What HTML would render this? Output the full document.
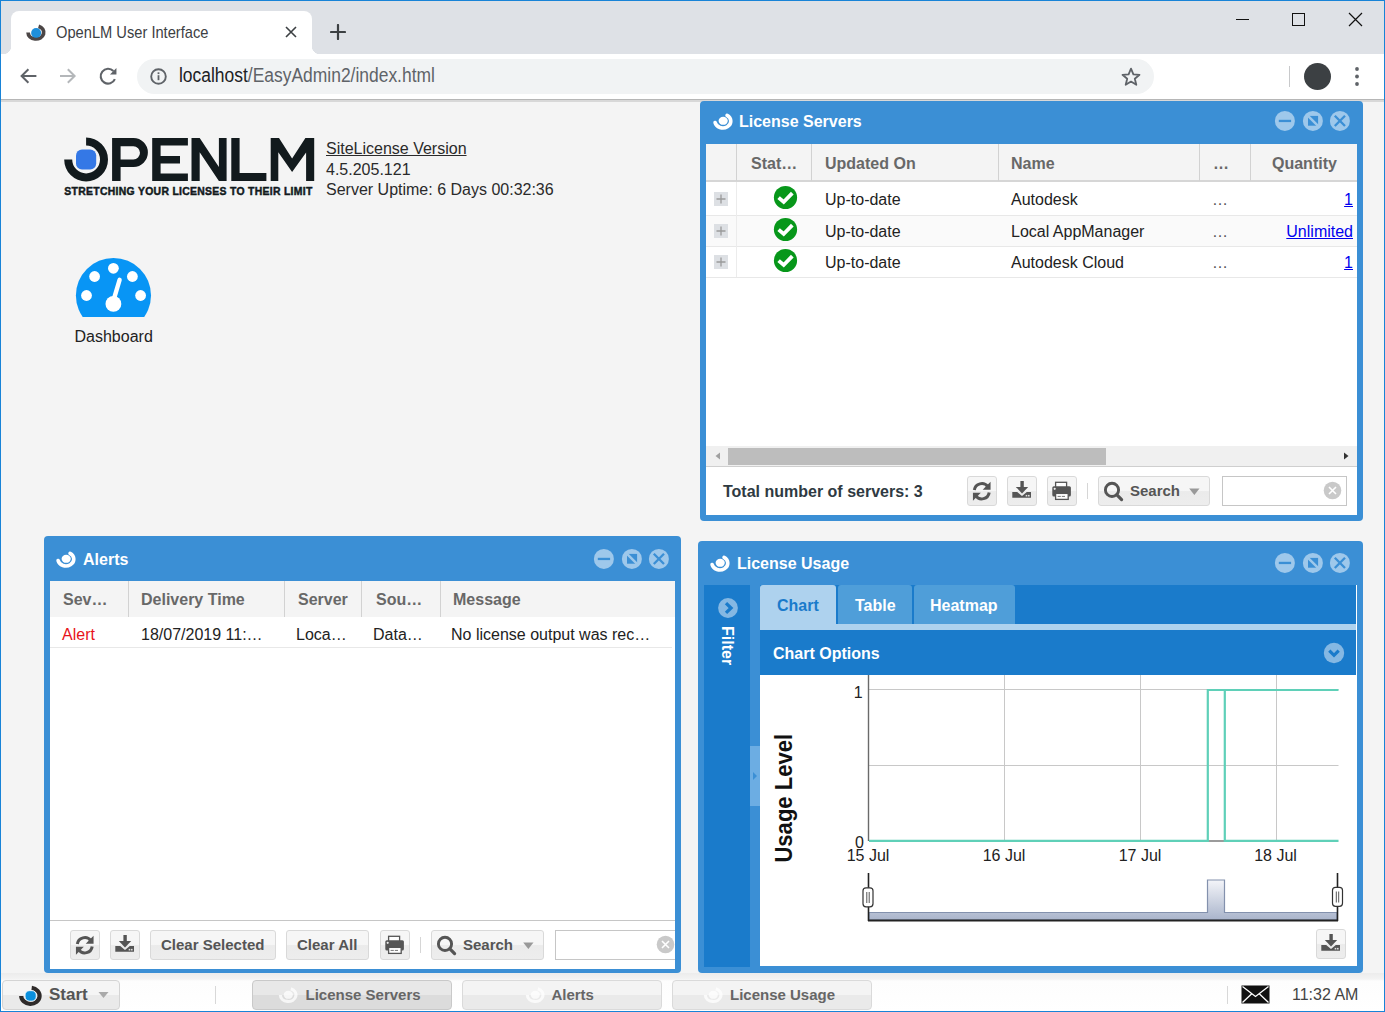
<!DOCTYPE html>
<html><head><meta charset="utf-8"><style>
*{box-sizing:border-box}
html,body{margin:0;padding:0}
body{width:1385px;height:1012px;overflow:hidden;position:relative;background:#f4f4f4;font-family:"Liberation Sans",sans-serif;color:#222}
.a{position:absolute}
svg{display:block}
#tabstrip{left:0;top:0;width:1385px;height:54px;background:#dee1e6}
#toolbar{left:0;top:54px;width:1385px;height:45px;background:#fff}
#tbline{left:0;top:99px;width:1385px;height:1px;background:#b6b6b6}
#wb{left:0;top:0;width:1385px;height:1012px;border:1px solid #1883d7;pointer-events:none;z-index:50}
#tab{left:11px;top:11px;width:301px;height:43px;background:#fff;border-radius:8px 8px 0 0}
#tab:before{content:"";position:absolute;left:-8px;bottom:0;width:8px;height:8px;background:radial-gradient(circle at 0 0,transparent 8px,#fff 8.5px)}
#tab:after{content:"";position:absolute;right:-8px;bottom:0;width:8px;height:8px;background:radial-gradient(circle at 100% 0,transparent 8px,#fff 8.5px)}
.ctext{color:#3c4043;white-space:nowrap}
#omni{left:137px;top:59px;width:1017px;height:35px;border-radius:18px;background:#f1f3f4}
.panel{background:#3b8fd5;border-radius:4px}
.ptitle{color:#fff;font-weight:bold;font-size:16px;white-space:nowrap}
.grid{background:#fff;overflow:hidden}
.gh{background:#f4f4f4;border-bottom:2px solid #d6d6d6}
.hd{font-weight:bold;color:#686868;font-size:16px;white-space:nowrap}
.cd{font-size:16px;color:#222;white-space:nowrap}
.vl{width:1px;background:#d2d2d2}
.btn{border:1px solid #d9d9d9;border-radius:3px;background:linear-gradient(#f6f6f6 0,#f6f6f6 48%,#ebebeb 52%,#ededed 100%)}
.btxt{font-weight:bold;font-size:15px;color:#555;white-space:nowrap}
</style></head><body>
<div id="tabstrip" class="a"></div><div id="tab" class="a"></div><div id="toolbar" class="a"></div><div id="tbline" class="a"></div><div class="a" style="left:0;top:100px;width:1385px;height:2px;background:#d8d8d8"></div><div id="omni" class="a"></div>
<div class="a ctext" style="left:56px;top:22.5px;font-size:16.4px;transform:scaleX(0.895);transform-origin:0 0">OpenLM User Interface</div>
<div class="a" style="left:179px;top:64.2px;font-size:20px;line-height:23px;transform:scaleX(0.872);transform-origin:0 0;color:#202124;white-space:nowrap">localhost<span style="color:#5f6368">/EasyAdmin2/index.html</span></div>
<svg class="a" style="left:24px;top:22px" width="24" height="22" viewBox="0 0 24 22"><path d="M14.57 4.39A7.8 6.45 0 1 1 4.10 10.45" fill="none" stroke="#4b4646" stroke-width="3.8" stroke-linecap="butt" /><ellipse cx="12.15" cy="10.95" rx="5.0" ry="4.9" fill="#1e8fdb" /></svg>
<svg class="a" style="left:285px;top:26px" width="12" height="12" viewBox="0 0 12 12"><path d="M1 1L11 11M11 1L1 11" stroke="#3c4043" stroke-width="1.6"/></svg>
<svg class="a" style="left:330px;top:24px" width="16" height="16" viewBox="0 0 16 16"><path d="M8 1V15M1 8H15" stroke="#3c4043" stroke-width="2.2" stroke-linecap="round"/></svg>
<div class="a" style="left:1236px;top:19px;width:13px;height:1px;background:#111"></div>
<div class="a" style="left:1292px;top:13px;width:13px;height:13px;border:1px solid #111"></div>
<svg class="a" style="left:1348px;top:12px" width="15" height="15" viewBox="0 0 15 15"><path d="M1 1L14 14M14 1L1 14" stroke="#111" stroke-width="1.2"/></svg>
<svg class="a" style="left:18px;top:66px" width="20" height="20" viewBox="0 0 20 20"><path d="M18.4 10H4M10.4 3.3L3.6 10L10.4 16.7" fill="none" stroke="#5f6368" stroke-width="2"/></svg>
<svg class="a" style="left:58px;top:66px" width="20" height="20" viewBox="0 0 20 20"><path d="M2 10H16.6M9.8 3.3L16.6 10L9.8 16.7" fill="none" stroke="#b4b7ba" stroke-width="2"/></svg>
<svg class="a" style="left:98px;top:66px" width="20" height="20" viewBox="0 0 20 20"><g transform="translate(10.6 10.3) scale(1.12) translate(-10 -10)"><path d="M15.6 12.5A6.6 6.6 0 1 1 14.3 5.3" fill="none" stroke="#5f6368" stroke-width="1.9"/><path d="M17 2.5V8.3H11.2Z" fill="#5f6368"/></g></svg>
<svg class="a" style="left:149px;top:67px" width="19" height="19" viewBox="0 0 19 19"><circle cx="9.5" cy="9.5" r="7.3" fill="none" stroke="#5f6368" stroke-width="1.9"/><rect x="8.6" y="8.2" width="1.8" height="5" fill="#5f6368"/><rect x="8.6" y="5.3" width="1.8" height="1.8" fill="#5f6368"/></svg>
<svg class="a" style="left:1120px;top:66px" width="22" height="22" viewBox="0 0 22 22"><path d="M11 2.6L13.4 8.3L19.5 8.8L14.8 12.8L16.3 18.8L11 15.6L5.7 18.8L7.2 12.8L2.5 8.8L8.6 8.3Z" fill="none" stroke="#5f6368" stroke-width="1.8" stroke-linejoin="round"/></svg>
<div class="a" style="left:1289px;top:66px;width:1px;height:21px;background:#c8c9cb"></div>
<div class="a" style="left:1304px;top:63px;width:27px;height:27px;border-radius:50%;background:#3c4043"></div>
<svg class="a" style="left:1352px;top:66px" width="10" height="22" viewBox="0 0 10 22"><circle cx="5" cy="3" r="1.9" fill="#5f6368"/><circle cx="5" cy="10.5" r="1.9" fill="#5f6368"/><circle cx="5" cy="18" r="1.9" fill="#5f6368"/></svg>
<svg class="a" style="left:0;top:100px" width="700" height="260" viewBox="0 100 700 260">
 <g fill="#121a1d">
  <path d="M64.2 159.5 A21.9 21.9 0 1 0 86.1 137.6 V145.6 A13.9 13.9 0 1 1 72.2 159.5 Z"/>
  <path d="M112.1 181 V138.1 H133.5 A14.4 14.4 0 0 1 133.5 166.9 H120.6 V181 Z M120.6 146.2 V159.4 H133.4 A6.6 6.6 0 0 0 133.4 146.2 Z" fill-rule="evenodd"/>
  <path d="M152.2 138.1 H187.9 V145.6 H160.6 V156 H180 V163.5 H160.6 V173.4 H187.9 V181 H152.2 Z"/>
  <path d="M191.5 181 V138.1 H199.7 L218.9 166.9 V138.1 H226.6 V181 H218.9 L199.7 152.2 V181 Z"/>
  <path d="M231.3 138.1 H239.6 V172.9 H266.4 V181 H231.3 Z"/>
  <path d="M270.7 181 V138.1 H279 L292.1 158.5 L305.4 138.1 H314.2 V181 H306.1 V152.5 L292.1 172 L278.3 152.2 V181 Z"/>
 </g>
 <rect x="76" y="149.4" width="20.2" height="20.2" rx="6" fill="#3478e6"/>
 <text x="64.3" y="194.9" font-family="Liberation Sans" font-weight="bold" font-size="10.4" fill="#121a1d" stroke="#121a1d" stroke-width="0.45" textLength="248" lengthAdjust="spacing">STRETCHING YOUR LICENSES TO THEIR LIMIT</text>
</svg>
<div class="a" style="left:326px;top:139px;font-size:16px;line-height:20.6px;color:#2a2a2a;white-space:nowrap"><span style="text-decoration:underline">SiteLicense Version</span><br>4.5.205.121<br>Server Uptime: 6 Days 00:32:36</div>
<svg class="a" style="left:70px;top:255px" width="90" height="65" viewBox="70 255 90 65">
 <defs><clipPath id="gc"><rect x="70" y="255" width="90" height="62"/></clipPath></defs>
 <circle cx="113.45" cy="295.45" r="37.55" fill="#0895f5" clip-path="url(#gc)"/>
 <g fill="#fff"><circle cx="113.4" cy="268.3" r="5.4"/><circle cx="94.6" cy="276.5" r="5.4"/><circle cx="132.4" cy="276.5" r="5.4"/><circle cx="86.5" cy="295.5" r="5.4"/><circle cx="140.6" cy="295.5" r="5.4"/><circle cx="113.4" cy="303.9" r="7.9"/></g>
 <path d="M113.6 300 L119.6 279.8" stroke="#fff" stroke-width="4.4" stroke-linecap="round"/>
</svg>
<div class="a" style="left:74.5px;top:327px;font-size:16px;line-height:20px;color:#222">Dashboard</div>
<div class="a panel" style="left:700px;top:101px;width:663px;height:420px"></div>
<svg class="a" style="left:712px;top:112px" width="22" height="20" viewBox="0 0 22 20"><path d="M15.06 3.43A7.95 6.75 0 1 1 3.07 10.55" fill="none" stroke="#fff" stroke-width="3.6" stroke-linecap="round" /><ellipse cx="11.2" cy="8.85" rx="4.6" ry="4.0" fill="#fff" /></svg>
<div class="a ptitle" style="left:739px;top:113px">License Servers</div>
<svg class="a" style="left:1274px;top:110px" width="77" height="22" viewBox="0 0 77 22">
 <circle cx="10.9" cy="10.9" r="10" fill="#9ec8eb"/><rect x="4.8" y="9.8" width="12.3" height="2.3" fill="#3b8fd5"/>
 <circle cx="38.9" cy="10.9" r="10" fill="#9ec8eb"/><rect x="34" y="5.9" width="10.1" height="9.8" fill="#3b8fd5"/><path d="M33 4.8L45 16.8" stroke="#9ec8eb" stroke-width="2.4"/>
 <circle cx="65.9" cy="10.9" r="10" fill="#9ec8eb"/><path d="M60.8 5.8L71 16M71 5.8L60.8 16" stroke="#3b8fd5" stroke-width="2.3"/>
</svg>
<div class="a grid" style="left:706px;top:144px;width:651px;height:371px">
 <div class="a gh" style="left:0;top:0;width:651px;height:38px"></div>
 <div class="a vl" style="left:30px;top:0;height:37px"></div>
 <div class="a vl" style="left:105px;top:0;height:37px"></div>
 <div class="a vl" style="left:292px;top:0;height:37px"></div>
 <div class="a vl" style="left:493px;top:0;height:37px"></div>
 <div class="a vl" style="left:544px;top:0;height:37px"></div>
 <div class="a hd" style="left:45px;top:11px">Stat…</div>
 <div class="a hd" style="left:119px;top:11px">Updated On</div>
 <div class="a hd" style="left:305px;top:11px">Name</div>
 <div class="a hd" style="left:507px;top:11px">…</div>
 <div class="a hd" style="left:566px;top:11px">Quantity</div>
 <div class="a" style="left:0;top:71px;width:651px;height:31px;background:#fafafa"></div>
 <div class="a" style="left:0;top:71px;width:651px;height:1px;background:#e8e8e8"></div>
 <div class="a" style="left:0;top:102px;width:651px;height:1px;background:#e8e8e8"></div>
 <div class="a" style="left:0;top:133px;width:651px;height:1px;background:#e8e8e8"></div>
 <div class="a" style="left:30px;top:38px;width:1px;height:95px;background:#ececec"></div>
</div>
<div class="a" style="left:714px;top:192px;width:14px;height:14px;background:#dde0e4"></div>
<svg class="a" style="left:714px;top:192px" width="14" height="14" viewBox="0 0 14 14"><path d="M7 2.5V11.5M2.5 7H11.5" stroke="#9a9a9a" stroke-width="1.3"/></svg>
<svg class="a" style="left:773px;top:185px" width="25" height="25" viewBox="0 0 25 25"><circle cx="12.5" cy="12.5" r="11.6" fill="#07971a"/><path d="M5.6 12.6L10.7 17L19.3 8.2" fill="none" stroke="#fff" stroke-width="3.8"/></svg>
<div class="a cd" style="left:825px;top:190px;line-height:20px">Up-to-date</div>
<div class="a cd" style="left:1011px;top:190px;line-height:20px">Autodesk</div>
<div class="a cd" style="left:1212px;top:190px;line-height:20px;color:#555">…</div>
<div class="a cd" style="right:32px;top:190px;line-height:20px;color:#0000ee;text-decoration:underline">1</div>
<div class="a" style="left:714px;top:224px;width:14px;height:14px;background:#dde0e4"></div>
<svg class="a" style="left:714px;top:224px" width="14" height="14" viewBox="0 0 14 14"><path d="M7 2.5V11.5M2.5 7H11.5" stroke="#9a9a9a" stroke-width="1.3"/></svg>
<svg class="a" style="left:773px;top:217px" width="25" height="25" viewBox="0 0 25 25"><circle cx="12.5" cy="12.5" r="11.6" fill="#07971a"/><path d="M5.6 12.6L10.7 17L19.3 8.2" fill="none" stroke="#fff" stroke-width="3.8"/></svg>
<div class="a cd" style="left:825px;top:222px;line-height:20px">Up-to-date</div>
<div class="a cd" style="left:1011px;top:222px;line-height:20px">Local AppManager</div>
<div class="a cd" style="left:1212px;top:222px;line-height:20px;color:#555">…</div>
<div class="a cd" style="right:32px;top:222px;line-height:20px;color:#0000ee;text-decoration:underline">Unlimited</div>
<div class="a" style="left:714px;top:255px;width:14px;height:14px;background:#dde0e4"></div>
<svg class="a" style="left:714px;top:255px" width="14" height="14" viewBox="0 0 14 14"><path d="M7 2.5V11.5M2.5 7H11.5" stroke="#9a9a9a" stroke-width="1.3"/></svg>
<svg class="a" style="left:773px;top:248px" width="25" height="25" viewBox="0 0 25 25"><circle cx="12.5" cy="12.5" r="11.6" fill="#07971a"/><path d="M5.6 12.6L10.7 17L19.3 8.2" fill="none" stroke="#fff" stroke-width="3.8"/></svg>
<div class="a cd" style="left:825px;top:253px;line-height:20px">Up-to-date</div>
<div class="a cd" style="left:1011px;top:253px;line-height:20px">Autodesk Cloud</div>
<div class="a cd" style="left:1212px;top:253px;line-height:20px;color:#555">…</div>
<div class="a cd" style="right:32px;top:253px;line-height:20px;color:#0000ee;text-decoration:underline">1</div>
<div class="a" style="left:706px;top:446px;width:651px;height:20px;background:#f0f0f0"></div>
<div class="a" style="left:706px;top:466px;width:651px;height:1px;background:#cfcfcf"></div>
<div class="a" style="left:728px;top:448px;width:378px;height:17px;background:#bdbdbd"></div>
<svg class="a" style="left:713px;top:451px" width="10" height="10" viewBox="0 0 10 10"><path d="M7 1.5V8.5L2.5 5Z" fill="#a0a0a0"/></svg>
<svg class="a" style="left:1341px;top:451px" width="10" height="10" viewBox="0 0 10 10"><path d="M3 1.5V8.5L7.5 5Z" fill="#333"/></svg>
<div class="a" style="left:723px;top:483px;font-weight:bold;font-size:16px;color:#2f3a42;white-space:nowrap">Total number of servers: 3</div>
<div class="a btn" style="left:967px;top:476px;width:30px;height:30px"></div><svg class="a" style="left:972px;top:481px" width="20" height="20" viewBox="0 0 20 20"><g transform="translate(9.75 10.25) scale(1.16) translate(-10 -10)"><path d="M3.6 9A6.5 6.5 0 0 1 15.2 6" fill="none" stroke="#555" stroke-width="2.6"/><path d="M17.6 1.8V8.6H10.8Z" fill="#555"/><path d="M16.4 11A6.5 6.5 0 0 1 4.8 14" fill="none" stroke="#555" stroke-width="2.6"/><path d="M2.4 18.2V11.4H9.2Z" fill="#555"/></g></svg>
<div class="a btn" style="left:1007px;top:476px;width:30px;height:30px"></div><svg class="a" style="left:1012px;top:481px" width="20" height="20" viewBox="0 0 20 20"><rect x="8.4" y="-0.2" width="3.4" height="6.5" fill="#555"/><path d="M3.8 5.9H16.2L10 12.6Z" fill="#555"/><path d="M0.3 11H5.2L10 15L14.8 11H19V16.8H0.3Z" fill="#555"/><rect x="13.7" y="13.9" width="1.6" height="1.6" fill="#ddd"/><rect x="16" y="13.9" width="1.6" height="1.6" fill="#ddd"/></svg>
<div class="a btn" style="left:1047px;top:476px;width:30px;height:30px"></div><svg class="a" style="left:1052px;top:481px" width="20" height="20" viewBox="0 0 20 20"><rect x="3.6" y="1.3" width="11" height="6" fill="#fff" stroke="#555" stroke-width="1.3"/><rect x="0.3" y="5.2" width="18.6" height="10.4" rx="1.6" fill="#555"/><circle cx="2.7" cy="7.8" r="1.1" fill="#eee"/><rect x="3.6" y="12.4" width="12.6" height="6" fill="#fff" stroke="#555" stroke-width="1.3"/><rect x="5.6" y="14.9" width="3.2" height="1" fill="#777"/><rect x="9.8" y="14.9" width="3.2" height="1" fill="#777"/></svg>
<div class="a" style="left:1087px;top:483px;width:1px;height:16px;background:#d6d6d6"></div>
<div class="a btn" style="left:1098px;top:476px;width:112px;height:30px"></div><svg class="a" style="left:1103px;top:481px" width="22" height="22" viewBox="0 0 22 22"><circle cx="9" cy="8.9" r="6.6" fill="none" stroke="#555" stroke-width="2.9"/><path d="M13.9 13.8L18.6 18.6" stroke="#555" stroke-width="3.2" stroke-linecap="round"/></svg><div class="a btxt" style="left:1130px;top:482px">Search</div><svg class="a" style="left:1188.5px;top:487.5px" width="11" height="8" viewBox="0 0 11 8"><path d="M0.2 0.4H10.5L5.35 7Z" fill="#999"/></svg>
<div class="a" style="left:1222px;top:476px;width:125px;height:30px;border:1px solid #c6c6c6;background:#fff"></div>
<svg class="a" style="left:1323px;top:481px" width="19" height="19" viewBox="0 0 19 19"><circle cx="9.5" cy="9.5" r="8.8" fill="#c9c9c9"/><path d="M6 6L13 13M13 6L6 13" stroke="#fff" stroke-width="1.6"/></svg>
<div class="a panel" style="left:44px;top:536px;width:637px;height:437px"></div>
<svg class="a" style="left:55px;top:549.5px" width="22" height="20" viewBox="0 0 22 20"><path d="M15.06 3.43A7.95 6.75 0 1 1 3.07 10.55" fill="none" stroke="#fff" stroke-width="3.6" stroke-linecap="round" /><ellipse cx="11.2" cy="8.85" rx="4.6" ry="4.0" fill="#fff" /></svg>
<div class="a ptitle" style="left:83px;top:551px">Alerts</div>
<svg class="a" style="left:593px;top:548px" width="77" height="22" viewBox="0 0 77 22">
 <circle cx="10.9" cy="10.9" r="10" fill="#9ec8eb"/><rect x="4.8" y="9.8" width="12.3" height="2.3" fill="#3b8fd5"/>
 <circle cx="38.9" cy="10.9" r="10" fill="#9ec8eb"/><rect x="34" y="5.9" width="10.1" height="9.8" fill="#3b8fd5"/><path d="M33 4.8L45 16.8" stroke="#9ec8eb" stroke-width="2.4"/>
 <circle cx="65.9" cy="10.9" r="10" fill="#9ec8eb"/><path d="M60.8 5.8L71 16M71 5.8L60.8 16" stroke="#3b8fd5" stroke-width="2.3"/>
</svg>
<div class="a grid" style="left:50px;top:581px;width:625px;height:388px">
 <div class="a" style="left:0;top:0;width:625px;height:36px;background:#f4f4f4"></div>
 <div class="a vl" style="left:78px;top:0;height:36px"></div>
 <div class="a vl" style="left:234px;top:0;height:36px"></div>
 <div class="a vl" style="left:311px;top:0;height:36px"></div>
 <div class="a vl" style="left:390px;top:0;height:36px"></div>
 <div class="a hd" style="left:13px;top:10px">Sev…</div>
 <div class="a hd" style="left:91px;top:10px">Delivery Time</div>
 <div class="a hd" style="left:248px;top:10px">Server</div>
 <div class="a hd" style="left:326px;top:10px">Sou…</div>
 <div class="a hd" style="left:403px;top:10px">Message</div>
 <div class="a cd" style="left:12px;top:45px;color:#e8131b">Alert</div>
 <div class="a cd" style="left:91px;top:45px">18/07/2019 11:…</div>
 <div class="a cd" style="left:246px;top:45px">Loca…</div>
 <div class="a cd" style="left:323px;top:45px">Data…</div>
 <div class="a cd" style="left:401px;top:45px">No license output was rec…</div>
 <div class="a" style="left:0;top:66px;width:622px;height:1px;background:#e8e8e8"></div>
 <div class="a" style="left:0;top:339px;width:625px;height:1px;background:#c6c6c6"></div>
</div>
<div class="a btn" style="left:70px;top:930px;width:30px;height:30px"></div><svg class="a" style="left:75px;top:935px" width="20" height="20" viewBox="0 0 20 20"><g transform="translate(9.75 10.25) scale(1.16) translate(-10 -10)"><path d="M3.6 9A6.5 6.5 0 0 1 15.2 6" fill="none" stroke="#555" stroke-width="2.6"/><path d="M17.6 1.8V8.6H10.8Z" fill="#555"/><path d="M16.4 11A6.5 6.5 0 0 1 4.8 14" fill="none" stroke="#555" stroke-width="2.6"/><path d="M2.4 18.2V11.4H9.2Z" fill="#555"/></g></svg>
<div class="a btn" style="left:110px;top:930px;width:30px;height:30px"></div><svg class="a" style="left:115px;top:935px" width="20" height="20" viewBox="0 0 20 20"><rect x="8.4" y="-0.2" width="3.4" height="6.5" fill="#555"/><path d="M3.8 5.9H16.2L10 12.6Z" fill="#555"/><path d="M0.3 11H5.2L10 15L14.8 11H19V16.8H0.3Z" fill="#555"/><rect x="13.7" y="13.9" width="1.6" height="1.6" fill="#ddd"/><rect x="16" y="13.9" width="1.6" height="1.6" fill="#ddd"/></svg>
<div class="a btn" style="left:150px;top:930px;width:126px;height:30px"></div><div class="a btxt" style="left:161px;top:936px">Clear Selected</div>
<div class="a btn" style="left:286px;top:930px;width:83px;height:30px"></div><div class="a btxt" style="left:297px;top:936px">Clear All</div>
<div class="a btn" style="left:380px;top:930px;width:30px;height:30px"></div><svg class="a" style="left:385px;top:935px" width="20" height="20" viewBox="0 0 20 20"><rect x="3.6" y="1.3" width="11" height="6" fill="#fff" stroke="#555" stroke-width="1.3"/><rect x="0.3" y="5.2" width="18.6" height="10.4" rx="1.6" fill="#555"/><circle cx="2.7" cy="7.8" r="1.1" fill="#eee"/><rect x="3.6" y="12.4" width="12.6" height="6" fill="#fff" stroke="#555" stroke-width="1.3"/><rect x="5.6" y="14.9" width="3.2" height="1" fill="#777"/><rect x="9.8" y="14.9" width="3.2" height="1" fill="#777"/></svg>
<div class="a" style="left:420px;top:937px;width:1px;height:16px;background:#d6d6d6"></div>
<div class="a btn" style="left:431px;top:930px;width:113px;height:30px"></div><svg class="a" style="left:436px;top:935px" width="22" height="22" viewBox="0 0 22 22"><circle cx="9" cy="8.9" r="6.6" fill="none" stroke="#555" stroke-width="2.9"/><path d="M13.9 13.8L18.6 18.6" stroke="#555" stroke-width="3.2" stroke-linecap="round"/></svg><div class="a btxt" style="left:463px;top:936px">Search</div><svg class="a" style="left:522.5px;top:941.5px" width="11" height="8" viewBox="0 0 11 8"><path d="M0.2 0.4H10.5L5.35 7Z" fill="#999"/></svg>
<div class="a" style="left:555px;top:930px;width:120px;height:30px;border:1px solid #c6c6c6;border-right:none;background:#fff"></div>
<svg class="a" style="left:656px;top:935px" width="19" height="19" viewBox="0 0 19 19"><circle cx="9.5" cy="9.5" r="8.8" fill="#c9c9c9"/><path d="M6 6L13 13M13 6L6 13" stroke="#fff" stroke-width="1.6"/></svg>
<div class="a panel" style="left:698px;top:541px;width:665px;height:432px"></div>
<svg class="a" style="left:709px;top:554px" width="22" height="20" viewBox="0 0 22 20"><path d="M15.06 3.43A7.95 6.75 0 1 1 3.07 10.55" fill="none" stroke="#fff" stroke-width="3.6" stroke-linecap="round" /><ellipse cx="11.2" cy="8.85" rx="4.6" ry="4.0" fill="#fff" /></svg>
<div class="a ptitle" style="left:737px;top:555px">License Usage</div>
<svg class="a" style="left:1274px;top:552px" width="77" height="22" viewBox="0 0 77 22">
 <circle cx="10.9" cy="10.9" r="10" fill="#9ec8eb"/><rect x="4.8" y="9.8" width="12.3" height="2.3" fill="#3b8fd5"/>
 <circle cx="38.9" cy="10.9" r="10" fill="#9ec8eb"/><rect x="34" y="5.9" width="10.1" height="9.8" fill="#3b8fd5"/><path d="M33 4.8L45 16.8" stroke="#9ec8eb" stroke-width="2.4"/>
 <circle cx="65.9" cy="10.9" r="10" fill="#9ec8eb"/><path d="M60.8 5.8L71 16M71 5.8L60.8 16" stroke="#3b8fd5" stroke-width="2.3"/>
</svg>
<div class="a" style="left:704px;top:585px;width:46px;height:382px;background:#1a7bcb"></div>
<svg class="a" style="left:718px;top:598px" width="20" height="20" viewBox="0 0 20 20"><circle cx="10" cy="10" r="9.9" fill="#85b8e3"/><path d="M8 5.1L13 10L8 14.9" fill="none" stroke="#1a7bcb" stroke-width="3.3"/></svg>
<div class="a" style="left:736px;top:626px;transform-origin:0 0;transform:rotate(90deg);font-weight:bold;font-size:16px;line-height:18px;color:#fff;white-space:nowrap">Filter</div>
<div class="a" style="left:750px;top:746px;width:10px;height:60px;background:#6cade3"></div>
<svg class="a" style="left:751px;top:770px" width="8" height="12" viewBox="0 0 8 12"><path d="M2 2V10L6 6Z" fill="#3b8fd5"/></svg>
<div class="a" style="left:760px;top:585px;width:597px;height:39px;background:#1a7bcb"></div>
<div class="a" style="left:760px;top:585px;width:76px;height:40px;background:#aed2ee;border-radius:3px 3px 0 0"></div>
<div class="a" style="left:838px;top:585px;width:74px;height:39px;background:#4f9ed9;border-radius:3px 3px 0 0"></div>
<div class="a" style="left:914px;top:585px;width:101px;height:39px;background:#4f9ed9;border-radius:3px 3px 0 0"></div>
<div class="a" style="left:777px;top:597px;font-weight:bold;font-size:16px;color:#1a7bcb">Chart</div>
<div class="a" style="left:855px;top:597px;font-weight:bold;font-size:16px;color:#fff">Table</div>
<div class="a" style="left:930px;top:597px;font-weight:bold;font-size:16px;color:#fff">Heatmap</div>
<div class="a" style="left:760px;top:624px;width:597px;height:6px;background:#aed2ee"></div>
<div class="a" style="left:760px;top:630px;width:597px;height:45px;background:#1a7bcb"></div>
<div class="a" style="left:773px;top:645px;font-weight:bold;font-size:16px;color:#fff">Chart Options</div>
<svg class="a" style="left:1323px;top:642px" width="22" height="22" viewBox="0 0 22 22"><circle cx="11" cy="11" r="10.2" fill="#85b8e3"/><path d="M6.3 8.6L11 13.3L15.7 8.6" fill="none" stroke="#1a7bcb" stroke-width="3.2"/></svg>
<div class="a" style="left:760px;top:675px;width:597px;height:291px;background:#fff"></div>
<div class="a" style="left:1356px;top:585px;width:1px;height:90px;background:#fff"></div>
<svg class="a" style="left:760px;top:675px" width="597" height="291" viewBox="760 675 597 291">
 <g stroke="#c8c8c8" stroke-width="1" fill="none">
  <path d="M868 689.5H1338.5M868 765.5H1338.5"/>
  <path d="M1004.5 675V841M1140.5 675V841M1276.5 675V841"/>
 </g>
 <path d="M868.5 675V841" stroke="#6a6a6a" stroke-width="1.4"/>
 <path d="M1208 841H1225" stroke="#7a7a7a" stroke-width="1.5"/>
 <g fill="none" stroke="#5fd0b8" stroke-width="2.2">
  <path d="M869 840.8H1207.8V690H1338.5"/>
  <path d="M1224.8 690V840.8H1338.5"/>
 </g>
 <g font-family="Liberation Sans" font-size="16" fill="#222">
  <text x="862.6" y="698" text-anchor="end">1</text>
  <text x="863.8" y="848.4" text-anchor="end">0</text>
  <text x="868" y="861" text-anchor="middle">15 Jul</text>
  <text x="1004" y="861" text-anchor="middle">16 Jul</text>
  <text x="1140" y="861" text-anchor="middle">17 Jul</text>
  <text x="1275.5" y="861" text-anchor="middle">18 Jul</text>
 </g>
 <text transform="translate(791.5 862.6) rotate(-90)" font-family="Liberation Sans" font-weight="bold" font-size="23.6" fill="#111" textLength="128.8" lengthAdjust="spacingAndGlyphs">Usage Level</text>
 <defs><linearGradient id="ng" x1="0" y1="0" x2="0" y2="1"><stop offset="0" stop-color="#f4f5f9"/><stop offset="1" stop-color="#a9b4cb"/></linearGradient></defs>
 <path d="M869 920V912.5H1207.5V880H1224.5V912.5H1337V920Z" fill="url(#ng)" stroke="#8391ad" stroke-width="1.2"/>
 <path d="M868.5 873V921M1337.5 873V921" stroke="#222" stroke-width="1.6"/>
 <path d="M868 920.5H1338" stroke="#222" stroke-width="2"/>
 <g fill="#fff" stroke="#333" stroke-width="1.2">
  <rect x="863" y="887.8" width="10" height="19" rx="3"/>
  <rect x="1332.5" y="887.3" width="10" height="19" rx="3"/>
 </g>
 <g stroke="#555" stroke-width="1"><path d="M866.8 892V903M869.2 892V903M1336.3 891.5V902.5M1338.7 891.5V902.5"/></g>
</svg>
<div class="a btn" style="left:1316px;top:929px;width:30px;height:30px"></div><svg class="a" style="left:1321px;top:934px" width="20" height="20" viewBox="0 0 20 20"><rect x="8.4" y="-0.2" width="3.4" height="6.5" fill="#555"/><path d="M3.8 5.9H16.2L10 12.6Z" fill="#555"/><path d="M0.3 11H5.2L10 15L14.8 11H19V16.8H0.3Z" fill="#555"/><rect x="13.7" y="13.9" width="1.6" height="1.6" fill="#ddd"/><rect x="16" y="13.9" width="1.6" height="1.6" fill="#ddd"/></svg>
<div class="a" style="left:1px;top:973px;width:1383px;height:38px;background:linear-gradient(#ececec 0,#f3f3f3 6px,#fdfdfd 8px,#fff 100%)"></div>
<div class="a" style="left:2px;top:980px;width:118px;height:30px;border:1px solid #d4d4d4;border-radius:4px;background:linear-gradient(#f5f5f5 0,#f5f5f5 50%,#eaeaea 50%,#eaeaea 100%)"></div>
<svg class="a" style="left:18px;top:984px" width="26" height="24" viewBox="0 0 26 24"><path d="M13.7 3.9 A9.2 8.0 0 1 1 3.2 12" fill="none" stroke="#2f2b2a" stroke-width="4.2"/><rect x="7.1" y="6.7" width="11.1" height="10.4" rx="4.2" fill="#0a90de" stroke="#fff" stroke-width="0.8"/></svg>
<div class="a" style="left:49px;top:985px;font-weight:bold;font-size:17px;color:#555">Start</div>
<svg class="a" style="left:98px;top:991px" width="11" height="8" viewBox="0 0 11 8"><path d="M0.5 1H10.5L5.5 7Z" fill="#aaa"/></svg>
<div class="a" style="left:215px;top:986px;width:1px;height:18px;background:#d8d8d8"></div>
<div class="a" style="left:252px;top:980px;width:200px;height:30px;border:1px solid #c9c9c9;border-radius:4px;background:linear-gradient(#e8e8e8 0,#e8e8e8 50%,#dcdcdc 50%,#dcdcdc 100%)"></div>
<svg class="a" style="left:278px;top:985px" width="22" height="20" viewBox="0 0 22 20"><path d="M12.87 3.70A7.8 6.6 0 1 1 2.40 9.90" fill="none" stroke="#fff" stroke-width="3.2" stroke-linecap="butt" opacity="0.75"/><ellipse cx="10.3" cy="9.8" rx="4.6" ry="4.0" fill="#fff" opacity="0.75"/></svg>
<div class="a" style="left:305.5px;top:986px;font-weight:bold;font-size:15px;color:#666;white-space:nowrap">License Servers</div>
<div class="a" style="left:462px;top:980px;width:200px;height:30px;border:1px solid #dadada;border-radius:4px;background:linear-gradient(#f4f4f4 0,#f4f4f4 50%,#eaeaea 50%,#eaeaea 100%)"></div>
<svg class="a" style="left:525px;top:985px" width="22" height="20" viewBox="0 0 22 20"><path d="M12.87 3.70A7.8 6.6 0 1 1 2.40 9.90" fill="none" stroke="#fff" stroke-width="3.2" stroke-linecap="butt" opacity="0.75"/><ellipse cx="10.3" cy="9.8" rx="4.6" ry="4.0" fill="#fff" opacity="0.75"/></svg>
<div class="a" style="left:551.4px;top:986px;font-weight:bold;font-size:15px;color:#666;white-space:nowrap">Alerts</div>
<div class="a" style="left:672px;top:980px;width:200px;height:30px;border:1px solid #dadada;border-radius:4px;background:linear-gradient(#f4f4f4 0,#f4f4f4 50%,#eaeaea 50%,#eaeaea 100%)"></div>
<svg class="a" style="left:703px;top:985px" width="22" height="20" viewBox="0 0 22 20"><path d="M12.87 3.70A7.8 6.6 0 1 1 2.40 9.90" fill="none" stroke="#fff" stroke-width="3.2" stroke-linecap="butt" opacity="0.75"/><ellipse cx="10.3" cy="9.8" rx="4.6" ry="4.0" fill="#fff" opacity="0.75"/></svg>
<div class="a" style="left:730px;top:986px;font-weight:bold;font-size:15px;color:#666;white-space:nowrap">License Usage</div>
<div class="a" style="left:1227px;top:986px;width:1px;height:18px;background:#d8d8d8"></div>
<svg class="a" style="left:1241px;top:985px" width="29" height="19" viewBox="0 0 29 19"><rect x="0.5" y="0.5" width="28" height="18" fill="#111"/><path d="M1.5 1.5L14.5 11.5L27.5 1.5M1.5 17.5L10.5 9M27.5 17.5L18.5 9" fill="none" stroke="#fff" stroke-width="1.3"/></svg>
<div class="a" style="left:1292px;top:986px;font-size:16px;color:#444;white-space:nowrap">11:32 AM</div>
<div id="wb" class="a"></div>
</body></html>
